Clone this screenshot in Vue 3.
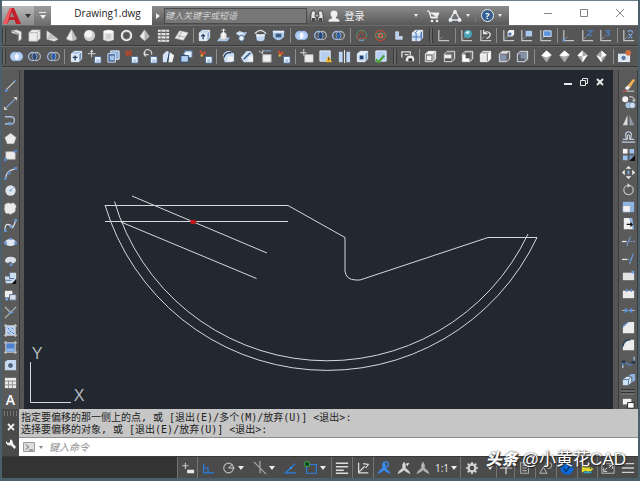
<script setup>
import { ref } from 'vue'

const query = ref('')
const command = ref('')

const axes = '<path d="M3 2v11.500h11" fill="none" stroke="#c4c4c4" stroke-width="1.300"/><path d="M3 13l4-4" stroke="#89a" fill="none"/>'
const smallBox = '<path d="M8 8h7v7H8z" fill="#eef3fa" stroke="#4f6e96"/><path d="M10 11h3v3h-3z" fill="#a9c7ea"/>'
const cube = (f, t, s) =>
  `<path d="M2.500 5.500l3-3h8v8l-3 3h-8z" fill="${s}"/><path d="M2.500 5.500h8v8h-8z" fill="${f}" stroke="#e9edf2"/><path d="M2.500 5.500l3-3h8l-3 3z" fill="${t}" stroke="#e9edf2"/><path d="M13.500 2.500v8l-3 3" fill="none" stroke="#dfe4ea"/>`
const viewCube = (f, t, s, inner) =>
  `<path d="M2.500 5.500l3-3h8v8l-3 3h-8z" fill="${s}" stroke="#f2f2f2"/><path d="M3 6h7v7H3z" fill="${f}"/><path d="M3.500 5l2-2h7l-2 2z" fill="${t}"/>${inner}`
const rings = (a, b, m) =>
  `<circle cx="6" cy="8" r="4.300" fill="${a}" stroke="#9dbbe6" stroke-width="1.400"/><circle cx="10" cy="8" r="4.300" fill="${b}" stroke="${b === 'none' ? '#a9adb4' : '#9dbbe6'}" stroke-width="1.400"/><path d="M8 4.200a4.300 4.300 0 0 1 0 7.600a4.300 4.300 0 0 1 0-7.600z" fill="${m}"/>`
const shape = (d, extra = '') => `<path d="${d}" fill="#ececec" stroke="#bdbdbd" stroke-width=".6"/>${extra}`
const gem = (d) => `<path d="M8 1.500l5.500 5L8 14.500 2.500 7z" fill="#a9a9a9"/><path d="${d}" fill="#fff"/>`
const person = (c) =>
  `<path d="M8 1l1.800 3.500L9.500 8l4 3.500 1.500 3-5-2.500L8 10l-2 2-5 2.500 1.500-3 4-3.500-.3-3.500z" fill="${c}" stroke="${c}" stroke-width=".6"/>`

const icons = {
  polysolid: shape('M3 3l5-1 5 2v8l-3 2V7L3 5z', '<path d="M3 3l7 3v8" stroke="#8a8a8a" fill="none"/>'),
  box: shape('M2 5l3-3h9v9l-3 3H2z', '<path d="M2 5h9v9M11 5l3-3" fill="none" stroke="#b4b4b4"/>'),
  wedge: shape('M2 3l12 9-4 2-8-2z', '<path d="M2 12l3-7 9 7" fill="#c2c2c2"/>'),
  cone: shape('M8 1.500l5.500 10Q8 15.500 2.500 11.500z', '<path d="M8 2l1 11.500q3-.5 4.500-2z" fill="#bdbdbd"/>'),
  sphere: '<circle cx="8" cy="8" r="6" fill="#cdcdcd"/><circle cx="7" cy="6.500" r="4" fill="#f4f4f4"/>',
  cylinder: shape('M2.500 3.500Q8 .5 13.500 3.500v9Q8 15.500 2.500 12.500z', '<path d="M5 6h6v6H5z" fill="#cfcfcf"/><ellipse cx="8" cy="4" rx="5" ry="1.500" fill="#fafafa"/>'),
  torus: '<circle cx="8" cy="8" r="5" fill="none" stroke="#eee" stroke-width="2.200"/><circle cx="8" cy="8" r="3.800" fill="none" stroke="#999" stroke-width=".7"/>',
  pyramid: shape('M8 2l5 7-5 4.500L3 9z', '<path d="M8 2v11.500L13 9z" fill="#b4b4b4"/>'),
  helix: '<path d="M2 3h12M2 6.500h12M2 10h12M2 13.500h12" stroke="#e4e4e4" stroke-width="2.200"/><path d="M5.500 2v12M10.500 2v12" stroke="#777" stroke-width="1"/>',
  plane: shape('M6 3l9 2-5 8-9-2z', '<path d="M4 8l8 2M8 4l-3 7" stroke="#aaa"/>'),
  press: cube('#dfeaf8', '#b8d2ef', '#8fb2dc') + '<path d="M6.500 12V7M4.500 9l2-2 2 2" stroke="#1d3554" stroke-width="1.300" fill="none"/>',
  extrude: '<path d="M1 14l3-4h11l-3 4z" fill="#a9c7ea"/>' + shape('M5 6l3-2 3 2v6H5z') + '<path d="M8 10V1M6 3l2-2 2 2" stroke="#fff" fill="none"/>',
  sweep: '<path d="M2 6l4-3 4 2 4-1-3 5-3 1-3-2z" fill="#b9d3f2"/><path d="M3 5l3 1 4-1" stroke="#fff" fill="none"/><circle cx="8" cy="11" r="3" fill="#e8f0fa" stroke="#46617f"/>',
  revolve: '<path d="M2 6Q8-1 14 6" fill="none" stroke="#e8e8e8" stroke-width="1.400"/><path d="M3 6l5 1 5-1-1 7Q8 15 4 13z" fill="#bcd5f2"/><path d="M4 7h8v2H4z" fill="#eee"/>',
  loft: '<path d="M2 3h12v6q-6 8-12 0z" fill="#a9c9ee"/><path d="M5 6h6v4H5z" fill="#3e5c7e"/><path d="M2 3h12v2H2z" fill="#e9f1fb"/>',
  union: rings('#b9d2f5', '#b9d2f5', '#f2f7ff'),
  subtract: rings('none', 'none', '#26467c'),
  intersect: rings('none', 'none', '#2d5ca5'),
  orbitA: '<circle cx="8" cy="8" r="5.500" fill="none" stroke="#4e9a72"/><path d="M3 11L8 3l5 8z" fill="none" stroke="#b54a3c"/><path d="M5 13h6" stroke="#7fa3d8"/>',
  orbitB: '<circle cx="8" cy="8" r="5.500" fill="none" stroke="#c0483c" stroke-width="1.300"/><ellipse cx="8" cy="8" rx="6" ry="2.500" fill="none" stroke="#3da06a"/><circle cx="8" cy="8" r="2" fill="none" stroke="#e06a54" stroke-width="1.400"/>',
  ell: '<path d="M5 4h3v5h4v3H5z" fill="#b5d0f2" stroke="#e4eefb" stroke-width=".7"/>',
  blocks: cube('#cfe1f7', '#e6f0fc', '#7fabdf') + '<path d="M6.500 5v9M2 9.500h9M8 2.500l-3 3M12 4v8" stroke="#3c6fae" fill="none"/>',
  ucs: axes,
  ucsWorld: axes + '<circle cx="9.500" cy="6.500" r="4.300" fill="#4ea4b8"/><path d="M6.500 5q3-3 5-1l-2 3z" fill="#d7eff4"/>',
  ucsPrev: axes + '<path d="M6 6q4-4 7 0 0 4-4 5M6 2v4h4" fill="none" stroke="#ececec" stroke-width="1.300"/>',
  ucsFace: axes + '<path d="M7 4l2-2h5v5l-2 2H7z" fill="#f2f2f2"/><path d="M8 5h3v3H8z" fill="#416ea8"/>',
  ucsObj: axes + '<path d="M7 3h7v6H7z" fill="#abc8ee"/>',
  ucsView: axes + '<path d="M6 3h8v6H6z" fill="#5c94dc" stroke="#dce8f8"/>',
  ucsOrigin: axes + '<circle cx="3" cy="13" r="1.500" fill="#6aa0e2"/>',
  ucsZ: axes + '<path d="M8 3h5L8 8h5" fill="none" stroke="#4d7fc0" stroke-width="1.300"/>',
  ucsThree: axes + '<path d="M8 3h4l-2 2q3 0 2 3H8" fill="none" stroke="#4d7fc0" stroke-width="1.300"/>',
  ucsX: axes + '<path d="M7 4q4-3 6 1M8 6l4 5M12 6l-4 5" fill="none" stroke="#7ba9e6" stroke-width="1.200"/>',
  faceExtrude: cube('#dbe8f8', '#9fc2eb', '#6c95c8') + '<path d="M4 9h5M6.500 7v5" stroke="#223c5d" stroke-width="1.400"/>',
  faceMove: '<path d="M5 1v8M1 5h8M5 1L4 3h2z" stroke="#ddd" fill="#ddd"/>' + smallBox,
  faceOffset: '<path d="M5 2h9v9H5z" fill="#8eb1dc" stroke="#e4eefa"/><path d="M2 5h8v9H2z" fill="#3a5b88" stroke="#dce8f7"/><path d="M4 7h5v5H4z" fill="#a7c4e8"/>',
  faceDelete: '<path d="M2 2l6 5M8 2L2 7" stroke="#b5462e" stroke-width="2.400"/>' + smallBox,
  faceRotate: '<path d="M3 8A4 4 0 1 1 9 6M2 2v4h4" fill="none" stroke="#d6d6d6" stroke-width="1.200"/>' + smallBox,
  faceTaper: '<path d="M2 6l4-4 3 1-3 11H2z" fill="#d5e4f7"/><path d="M9 3l5 4-2 7H8z" fill="#f1f1f1"/><path d="M9 2L7 14" stroke="#27476e"/>',
  faceCopy: '<path d="M6 2h8v7H6z" fill="#dbe8f8" stroke="#50749f"/><path d="M2 7h8v7H2z" fill="#b4cff0" stroke="#27476e"/><path d="M5 5h7" stroke="#fff"/>',
  faceColor: '<path d="M2 2l3 3M8 3L4 7" stroke="#c8512e" stroke-width="2.200"/><circle cx="4" cy="7" r="1.300" fill="#d9b23a"/>' + smallBox,
  fillet: '<path d="M2 7Q3 2 9 2l5 3v8l-4 1H4z" fill="#c8dcf4"/><path d="M3 9Q5 3 11 4" fill="none" stroke="#223c5d" stroke-width="1.500"/><path d="M7 8h6v5H7z" fill="#f2f2f2"/>',
  chamfer: '<path d="M1 9l6-7h4l3 4v8H4z" fill="#cfe0f5"/><path d="M4 11l7-7" stroke="#36557c" stroke-width="1.500"/><path d="M9 8h5v5H9z" fill="#f4f4f4"/>',
  edgeCopy: '<path d="M1 2l4 3M5 1v4" stroke="#ddd"/><path d="M5 6h9v8H5z" fill="#f0f0f0" stroke="#aaa"/><path d="M5 2h9" stroke="#8eb1dc"/>',
  imprint: '<path d="M4 0v7M0 4h7" stroke="#ddd"/>' + shape('M5 6h9v8H5z'),
  check: '<path d="M2 2h11v11H2z" fill="#b7d0f1" stroke="#e5eefa"/><path d="M11 7l4 7H8z" fill="#f3b62d"/><path d="M11.500 9v3" stroke="#402a00"/>',
  separate: '<path d="M2 3h4v11H2zM10 3h4v11h-4z" fill="#bcd5f4"/><path d="M8 1v14" stroke="#eee"/>',
  shell: cube('#cfe1f7', '#e6f0fc', '#7fabdf') + '<path d="M5 7h4v4H5z" fill="#1f4272"/>',
  clean: '<path d="M3 2h11v11H3z" fill="#b7d0f1" stroke="#e7effb"/><path d="M3 11l3 3 6-7" fill="none" stroke="#47a338" stroke-width="2.400"/>',
  named: '<path d="M2 9V3h9v3M5 6h4" fill="none" stroke="#e0e0e0" stroke-width="1.400"/><path d="M6 13q0-6 5-6t4 6z" fill="#ececec"/><path d="M9 10h4v3H9z" fill="#333"/>',
  vTop: viewCube('#6f6f6f', '#fff', '#bbb', '<path d="M4 7h5v5H4z" fill="#eee"/>'),
  vBottom: viewCube('#eee', '#777', '#666', '<path d="M3 10h7v3H3z" fill="#555"/>'),
  vLeft: viewCube('#fff', '#999', '#777', '<path d="M6 4h5v6H6z" fill="#555"/>'),
  vRight: viewCube('#e9e9e9', '#aaa', '#fff', '<path d="M10 5v8" stroke="#777"/>'),
  vFront: viewCube('#8493aa', '#ddd', '#666', ''),
  vBack: viewCube('#59616e', '#768091', '#8b95a5', '<path d="M6 4h6v6H6z" fill="#8592a8"/>'),
  isoA: gem('M8 1.500l5.500 5L8 9 2.500 7z'),
  isoB: gem('M2.500 7L8 1.500l5.500 5L8 8z'),
  isoC: gem('M8 1.500V8L2.500 7zM8 8l5.500-1.500L8 14.500z'),
  isoD: gem('M8 1.500l5.500 5L8 9zM2.500 7L8 9v5.500z'),
  camera: '<path d="M1 5h13v9H1z" fill="#dfe7f2"/><circle cx="7" cy="9.500" r="3" fill="#5c7da8" stroke="#fff"/><circle cx="12" cy="4" r="3" fill="#d4703c"/>',
  line: '<path d="M3 13L13 3" stroke="#c9c9c9" stroke-width="1.300"/><path d="M2 12h3v3H2zM12 2h2v2h-2z" fill="#5c86bd"/>',
  xline: '<path d="M3 13L13 3" stroke="#7fa5d6" stroke-width="1.300"/><path d="M1 15v-4l4 4zM15 1v4l-4-4z" fill="#d6cfc0"/>',
  pline: '<path d="M2 4h7q4 1 3 5t-5 2l-5 1" fill="none" stroke="#a7bedd" stroke-width="1.400"/><path d="M6 10h3v3H6z" fill="#6c9ddc"/>',
  polygon: shape('M8 2.500l6 4.500-2.500 6.500h-7L2 7z'),
  rect: shape('M3 4h10v8H3z', '<path d="M12 2h3v3h-3zM1 11h3v3H1z" fill="#5484c4"/>'),
  arc: '<path d="M3 13Q3 5 13 3" fill="none" stroke="#c9d4e2" stroke-width="1.300"/><path d="M1 12h3v3H1zM5 6h3v3H5zM12 1h3v3h-3z" fill="#5d89c4"/>',
  circle: '<circle cx="8" cy="8" r="5.500" fill="#dfe6ef"/><path d="M8 8l4-4" stroke="#8fb1dd"/><circle cx="8" cy="8" r="1.300" fill="#8fb1dd"/>',
  cloud: shape('M3 3q3-2 5 0 4-2 5 1 2 2 0 4 1 4-3 5-2 2-4 0-4 1-4-3 -1-2 0-4-1-2 1-3z'),
  spline: '<path d="M2 13q0-7 4-6t4 3 4-8" fill="none" stroke="#d7dfea" stroke-width="1.400"/><path d="M1 12h3v3H1zM7 8h3v3H7zM12 1h3v3h-3z" fill="#6892cc"/>',
  ellipse: '<ellipse cx="8" cy="8" rx="6" ry="3.800" fill="#dfe7f1"/><path d="M6.500 3h3v2h-3zM1 7h3v3H1zM12 7h3v3h-3z" fill="#6793d0"/>',
  ellArc: '<path d="M2 9q0-5 6-5t6 4q-1 3-4 3l-2-2-3 2z" fill="#d8e0ea"/><path d="M7 11h3v3H7z" fill="#6793d0"/>',
  insert: '<path d="M2 7h5V3h7v6l-4 5H3z" fill="#cfdff2"/><path d="M7 3v6h5M3 11h6" stroke="#4b719f" fill="none"/><path d="M14 10v5H9z" fill="#111"/>',
  block: '<path d="M2 3h8v7H2z" fill="#f0f0f0"/><path d="M7 7h7v6H7z" fill="#d5dfec" stroke="#5a6d86"/><circle cx="4" cy="12" r="1.500" fill="#7ba6df"/>',
  point: '<path d="M2 2l6 6M14 2L2 14" stroke="#aeb9b9" stroke-width="1.400" fill="none"/><path d="M8 8h3" stroke="#6c9ddc"/><circle cx="8" cy="8" r="1.300" fill="#6c9ddc"/>',
  hatch: '<path d="M3 3h10v10H3z" fill="#b9d2f2"/><path d="M1 3h14M3 1v14M13 1v14M1 13h14" stroke="#d9d9d9"/><path d="M5 5l2 2M9 5l2 2M7 8l2 2M5 10l2 2M10 10l2 2" stroke="#3c6fae"/>',
  gradient: '<path d="M3 3h10v10H3z" fill="#4e84cf"/><path d="M4 9h8v3H4z" fill="#8db4e8"/><path d="M1 3h14M3 1v14M13 1v14M1 13h14" stroke="#d9d9d9"/>',
  region: '<path d="M2 4l3-2h9v11H2z" fill="#c6d9f0"/><circle cx="8" cy="8" r="3.200" fill="#4d6787" stroke="#eef4fb"/>',
  table: '<path d="M2 3h12v11H2z" fill="#ececec"/><path d="M2 6.500h12M2 10.500h12M6 6v8M10 6v8" stroke="#8c8c8c"/>',
  erase: '<path d="M7 8l6-7 2 1-5 8z" fill="#f1b154"/><path d="M4 11l3-3 3 2-3 3z" fill="#f6f6f6"/><path d="M2 14h4" stroke="#d35543" stroke-width="1.500"/><path d="M6 14h8" stroke="#ddd"/>',
  copy: '<circle cx="4.500" cy="4.500" r="3.200" fill="#f3f3f3"/><path d="M9 2q5-1 5 4M12 5l2 2 1-2" fill="none" stroke="#eee"/><circle cx="8" cy="11" r="3.200" fill="#a9c7ea"/><circle cx="12" cy="11" r="3.200" fill="#cfe0f4" stroke="#5e7c9f" stroke-width=".6"/>',
  mirror: '<path d="M7 2v11H2z" fill="#d9d9d9"/><path d="M9 2v11h5z" fill="#8f9aa6"/>',
  offset: '<path d="M1 13h14M2 10h4q-3-8 2-8t2 8h4" fill="none" stroke="#b9cbe2" stroke-width="1.300"/><path d="M7 10q-1-5 1-5t1 5" fill="none" stroke="#eee"/>',
  array: '<path d="M2 2h5v5H2z" fill="#f4f4f4"/><path d="M9 2h5v5H9zM2 9h5v5H2z" fill="#9dc0ec"/><path d="M9 9h5l-5 5z" fill="#6b99d2"/><path d="M15 9v6H9z" fill="#111"/>',
  move: '<path d="M8 1l3 3H5zM8 15l3-3H5zM1 8l3-3v6zM15 8l-3-3v6z" fill="#f1f1f1"/><path d="M7 6h2v4H7z" fill="#79a7e0"/>',
  rotate: '<circle cx="8" cy="8.500" r="5" fill="none" stroke="#b9b9b9" stroke-width="1.400"/><path d="M7 1v5l3-2z" fill="#ddd"/>',
  scale: '<path d="M2 3h12v11H2z" fill="#8fb4e3"/><path d="M2 7h8v7H2z" fill="#f2f2f2" stroke="#7493b8" stroke-width=".6"/>',
  stretch: '<path d="M3 2h6l4 12H3z" fill="#f0f0f0"/><path d="M9 2h3l2 12h-2z" fill="#8fb4e3"/><path d="M6 9h6M10 7l2 2-2 2" stroke="#111" stroke-width="1.300" fill="none"/>',
  trim: '<path d="M1 8h5" stroke="#e6e6e6" stroke-width="1.400"/><path d="M7 8h8" stroke="#7398c8" stroke-dasharray="2 1"/><path d="M6 13l4-10" stroke="#7ba9e6"/>',
  extend: '<path d="M1 9h6" stroke="#e0e0e0" stroke-width="1.400"/><path d="M7 9h4" stroke="#7398c8" stroke-dasharray="2 1"/><path d="M9 14l4-11" stroke="#6f9bd6" stroke-width="1.300"/>',
  breakAt: '<path d="M2 5h12v8H2z" fill="#e4e4e4"/><path d="M11 3h3v3h-3z" fill="#6c9ddc"/>',
  breakGap: '<path d="M2 5h12v8H2z" fill="#ececec"/><path d="M5 3h2v3H5zM10 3h2v3h-2z" fill="#5c84bb"/>',
  join: '<path d="M1 8h14" stroke="#b9b9b9"/><path d="M4 5l4 3-4 3zM12 5L8 8l4 3z" fill="#5b93e0"/>',
  cham: '<path d="M2 8l6-6h6v12H2z" fill="#ececec"/><path d="M2 7l6-5" stroke="#6ca0e6" stroke-width="1.300"/>',
  fil: '<path d="M2 14V10q1-7 8-7h4v11z" fill="#ececec"/><path d="M2 10q1-7 8-7" stroke="#25405f" stroke-width="1.600" fill="none"/>',
  blend: '<path d="M2 13V9q0-4 4 0t8-2V2" fill="none" stroke="#547fba" stroke-width="1.500"/><path d="M1 6h4v2H1zM11 7h4v2h-4z" fill="#1e2b3b"/><path d="M2 14v-3M14 2v3" stroke="#ddd"/>',
  explode: '<path d="M2 8l4-3h5v6l-3 3H2z" fill="#cde0f6"/><path d="M8 4l3-2h4v7l-3 2V5z" fill="#8db4e4"/><path d="M2 8h6v6M8 8l3-3" stroke="#59789d" fill="none"/>',
  order: '<path d="M2 3h9v6H2z" fill="#f4f4f4"/><path d="M7 7h7v6H7z" fill="#fff" stroke="#222"/>',
  snap: '<path d="M5 2v7M1.500 5.500h7" stroke="#cfcfcf" stroke-width="1.200"/><path d="M7 10h8v4H7z" fill="#e9e9e9"/>',
  ortho: '<path d="M3 3v10.500h12M3 8h5v5" fill="none" stroke="#2b7de0" stroke-width="1.400"/>',
  polar: '<circle cx="7.500" cy="8" r="5.500" fill="none" stroke="#bdbdbd" stroke-width="1.300"/><path d="M7.500 8h7M7.500 8l4-4" stroke="#ddd" fill="none"/>',
  iso: '<path d="M1 1l14 14M8 0v14" stroke="#aaa" stroke-width="1.400"/>',
  track: '<path d="M14 3L3 13.500h12" fill="none" stroke="#2b7de0" stroke-width="1.500"/><circle cx="9" cy="8" r="1.300" fill="#4894f0"/>',
  osnap: '<path d="M3 4h11v10H3z" fill="none" stroke="#2f7fe4" stroke-width="1.300"/><path d="M1 1h5v5H1z" fill="#10361a" stroke="#36bd47"/>',
  weight: '<path d="M1 2.500h14M1 6.500h14" stroke="#ddd" stroke-width="1.600"/><path d="M1 10.500h9M1 14h14" stroke="#ddd" stroke-width="1.800"/>',
  ducs: '<path d="M3 2v11.500h11M3 13l7-7M8 3l6 1-3 4" fill="none" stroke="#ddd" stroke-width="1.400"/>',
  annoBlue: person('#3a8cf0') + '<circle cx="10" cy="4" r="3" fill="none" stroke="#3a8cf0" stroke-width="1.400"/>',
  annoLight: person('#d6d6d6') + '<path d="M10 3l4-1-2 4z" fill="#eee"/>',
  anno: person('#b5b5b5'),
  gear: '<circle cx="8" cy="8" r="4" fill="none" stroke="#d0d0d0" stroke-width="2.800"/><path d="M8 1v3M8 12v3M1 8h3M12 8h3M3 3l2 2M11 11l2 2M13 3l-2 2M3 13l2-2" stroke="#d0d0d0" stroke-width="1.800"/>',
  plus: '<path d="M8 1v14M1 8h14" stroke="#ddd" stroke-width="1.400"/>',
  doc: '<path d="M3 2h9v12H3zM5 5h5M5 8h5M5 11h5" fill="none" stroke="#aaa" stroke-width="1.200"/>',
  isolate: '<path d="M5 7l4 7H1z" fill="none" stroke="#c8c8c8"/><circle cx="11" cy="5" r="3.500" fill="none" stroke="#c8c8c8"/>',
  perf: '<circle cx="8" cy="8" r="7.500" fill="#0c6ad8"/><path d="M4 8l3 4 6-8" fill="none" stroke="#072b60" stroke-width="1.400"/>',
  fish: '<path d="M1 5l4 2q5-3 9 2-4 5-9 2l-4 2z" fill="#e5dc2a"/><path d="M3 12h9v2H3z" fill="#30a7cb"/><circle cx="11" cy="8" r="1" fill="#173d52"/>',
  full: '<path d="M1 3h14v11H1z" fill="none" stroke="#c5c5c5"/><path d="M4 11l3-3M12 5L9 8M3 8v4h4M9 5h4v4" fill="none" stroke="#ddd"/>',
  burger: '<path d="M1 3h14M1 8h14M1 13h14" stroke="#cfcfcf" stroke-width="1.700"/>',
}

const topRow = [
  { names: ['polysolid', 'box', 'wedge', 'cone', 'sphere', 'cylinder', 'torus', 'pyramid', 'helix', 'plane'] },
  { names: ['press', 'extrude', 'sweep', 'revolve', 'loft'] },
  { names: ['union', 'subtract', 'intersect'] },
  { names: ['orbitA', 'orbitB', 'ell', 'blocks'] },
  { names: ['ucs'], grip: true },
  { names: ['ucsWorld', 'ucsPrev'] },
  { names: ['ucsFace', 'ucsObj', 'ucsView'] },
  { names: ['ucsOrigin', 'ucsZ', 'ucsThree'] },
  { names: ['ucsX'] },
]
const secondRow = [
  { names: ['union', 'subtract', 'intersect'] },
  { names: ['faceExtrude', 'faceMove', 'faceOffset', 'faceDelete', 'faceRotate', 'faceTaper', 'faceCopy', 'faceColor'] },
  { names: ['fillet', 'chamfer', 'edgeCopy', 'faceColor'] },
  { names: ['imprint', 'check', 'separate', 'shell', 'clean'] },
  { names: ['named'], grip: true },
  { names: ['vTop', 'vBottom', 'vLeft', 'vRight', 'vFront', 'vBack'] },
  { names: ['isoA', 'isoB', 'isoC', 'isoD'] },
  { names: ['camera'] },
]
const rows = [topRow, secondRow]
const drawTools = ['line', 'xline', 'pline', 'polygon', 'rect', 'arc', 'circle', 'cloud', 'spline', 'ellipse', 'ellArc', 'insert', 'block', 'point', 'hatch', 'gradient', 'region', 'table']
const editTools = ['erase', 'copy', 'mirror', 'offset', 'array', 'move', 'rotate', 'scale', 'stretch', 'trim', 'extend', 'breakAt', 'breakGap', 'join', 'cham', 'fil', 'blend', 'explode']
const status = [
  { icon: 'snap' }, { icon: 'ortho' }, { icon: 'polar', menu: true }, { icon: 'iso', menu: true },
  { icon: 'track' }, { icon: 'osnap', menu: true }, { icon: 'weight', edge: true }, { icon: 'ducs', edge: true },
  { icon: 'annoBlue', edge: true }, { icon: 'annoLight' }, { icon: 'anno' }, { label: '1:1', menu: true },
  { icon: 'gear', menu: true, edge: true, wide: true }, { icon: 'plus', edge: true }, { icon: 'doc', edge: true },
  { icon: 'isolate', edge: true }, { icon: 'perf', edge: true }, { icon: 'fish', edge: true },
  { icon: 'full', edge: true }, { icon: 'burger' },
]
</script>

<template>
  <div class="app">
    <header class="title">
      <button class="logo" aria-label="A">
        <svg viewBox="0 0 20 18" width="20" height="18">
          <path d="M1 17L8 1h4l7 16h-5l-1.500-4h-5L5 17z" fill="#c3202c" />
          <path d="M1 17L8 1l2 0-5 16z" fill="#ee5a5f" />
          <path d="M8 10l2-5 2 5z" fill="#8c8c8c" />
        </svg>
        <i class="caret dark"></i>
      </button>
      <button class="quick" aria-label="menu"><i class="bar"></i><i class="caret"></i></button>
      <div class="tab">Drawing1.dwg</div>
      <div class="info">
        <i class="next"></i>
        <input v-model="query" class="search" aria-label="search" placeholder="键入关键字或短语" />
        <button class="plain" aria-label="find">
          <svg viewBox="0 0 14 14" width="14" height="14">
            <path d="M2 2h3l1 4v6H1V6zM9 2h3l1 4v6H8V6zM5 5h4v3H5z" fill="#e6e6e6" stroke="#333" stroke-width=".7" />
            <path d="M2 9h3v3H2zM9 9h3v3H9z" fill="#444" />
          </svg>
        </button>
        <button class="login">
          <svg viewBox="0 0 14 14" width="14" height="14">
            <path d="M1 13q0-4 4-4-2-2-2-4 0-4 4-4t4 4q0 2-2 4 4 0 4 4z" fill="#f0f0f0" stroke="#555" stroke-width=".6" />
          </svg>
          <span>登录</span>
          <i class="caret tiny"></i>
        </button>
        <button class="plain" aria-label="cart">
          <svg viewBox="0 0 14 14" width="14" height="14">
            <path d="M1 2h2l2 7h7M4 4h9l-2 4H5z" fill="#eee" stroke="#eee" />
            <circle cx="6" cy="12" r="1.300" fill="#eee" /><circle cx="11" cy="12" r="1.300" fill="#eee" />
          </svg>
        </button>
        <button class="plain with-caret" aria-label="apps">
          <svg viewBox="0 0 14 14" width="14" height="14">
            <path d="M7 2l5 9H2z" fill="none" stroke="#dce8f8" stroke-width="1.500" />
            <circle cx="7" cy="3" r="2" fill="#eee" /><circle cx="2.500" cy="11" r="2" fill="#eee" /><circle cx="11.500" cy="11" r="2" fill="#eee" />
          </svg>
          <i class="caret tiny"></i>
        </button>
        <button class="help with-caret" aria-label="help"><b>?</b><i class="caret tiny"></i></button>
      </div>
      <div class="win">
        <button aria-label="minimize"><svg viewBox="0 0 10 10" width="10" height="10"><path d="M1 5.500h8" /></svg></button>
        <button aria-label="maximize"><svg viewBox="0 0 10 10" width="10" height="10"><path d="M1.500 1.500h7v7h-7z" /></svg></button>
        <button aria-label="close"><svg viewBox="0 0 10 10" width="10" height="10"><path d="M1 1l8 8M9 1L1 9" /></svg></button>
      </div>
    </header>

    <nav v-for="(row, r) in rows" :key="r" class="tools" :class="{ second: r === 1 }">
      <div
        v-for="(group, g) in row"
        :key="g"
        class="group"
        :class="{ grip: group.grip, first: g === 0 }"
        :style="{ flexGrow: group.names.length }"
      >
        <button v-for="name in group.names" :key="name" class="tool" :aria-label="name">
          <svg viewBox="0 0 16 16" width="15" height="15" v-html="icons[name]"></svg>
        </button>
      </div>
    </nav>

    <main class="work">
      <aside class="side">
        <button v-for="name in drawTools" :key="name" class="tool" :aria-label="name">
          <svg viewBox="0 0 16 16" width="15" height="15" v-html="icons[name]"></svg>
        </button>
        <button class="tool letter">A</button>
      </aside>
      <section class="model">
        <svg class="drawing" viewBox="24 70 589 339" preserveAspectRatio="xMinYMin meet">
          <g fill="none" stroke="#d6d9dc" stroke-width="1">
            <path d="M105 205.500H288L345 237.500V271Q346 280 356 280H360L488 237.500H537" />
            <path d="M105 205A232 232 0 0 0 537 237.500" />
            <path d="M114.500 201.500A222 222 0 0 0 528 234" />
            <path d="M105 221.500H288M132 196L267 253M121 222L256.500 278.500" />
            <path d="M30.500 362V402.500H71" />
          </g>
          <path d="M190 220h5l2 2-3 2h-3z" fill="#c8161d" />
          <g class="axis"><text x="37" y="359">Y</text><text x="79" y="401">X</text></g>
        </svg>
        <div class="doc-win">
          <button aria-label="minimize drawing"><svg viewBox="0 0 10 10" width="10" height="10"><path d="M1 7h8" /></svg></button>
          <button aria-label="restore drawing"><svg viewBox="0 0 10 10" width="10" height="10"><path d="M1.500 3.500h5v5h-5zM3.500 3V1.500h5v5H7" class="fine" /></svg></button>
          <button aria-label="close drawing"><svg viewBox="0 0 10 10" width="10" height="10"><path d="M2 2l6 6M8 2L2 8" /></svg></button>
        </div>
      </section>
      <aside class="side right">
        <button v-for="name in editTools" :key="name" class="tool" :aria-label="name">
          <svg viewBox="0 0 16 16" width="15" height="15" v-html="icons[name]"></svg>
        </button>
        <i class="handle"></i>
        <button class="tool cut" aria-label="order">
          <svg viewBox="0 0 16 16" width="15" height="15" v-html="icons.order"></svg>
        </button>
      </aside>
    </main>

    <section class="command">
      <div class="rail">
        <i class="dots"></i>
        <button aria-label="close command line"><svg viewBox="0 0 10 10" width="10" height="10"><path d="M2 2l6 6M8 2L2 8" stroke="#f0f0f0" stroke-width="1.800" /></svg></button>
        <button aria-label="customize"><svg viewBox="0 0 12 12" width="12" height="12"><path d="M1 3l2 2 2-1V1.500q3 0 3 4l3 3.500-1.500 2L6 7.500Q2 8 1 5z" fill="#f0f0f0" /></svg></button>
      </div>
      <div class="console">
        <div class="log">
          <p>指定要偏移的那一侧上的点, 或 [退出(E)/多个(M)/放弃(U)] &lt;退出&gt;:</p>
          <p>选择要偏移的对象, 或 [退出(E)/放弃(U)] &lt;退出&gt;:</p>
        </div>
        <label class="prompt">
          <svg viewBox="0 0 12 12" width="12" height="12">
            <path d="M.5 1.500h11v9H.5z" fill="#dedede" stroke="#9a9a9a" />
            <path d="M3 3.500l2.500 2.500L3 8.500M6 9h4" fill="none" stroke="#555" />
          </svg>
          <i class="caret grey"></i>
          <input v-model="command" aria-label="command" placeholder="键入命令" />
        </label>
      </div>
    </section>

    <footer class="status">
      <div class="blank"></div>
      <button
        v-for="(cell, i) in status"
        :key="i"
        class="cell"
        :class="{ edge: cell.edge, wide: cell.wide }"
        :aria-label="cell.icon || cell.label"
      >
        <svg v-if="cell.icon" viewBox="0 0 16 16" width="14" height="14" v-html="icons[cell.icon]"></svg>
        <span v-else>{{ cell.label }}</span>
        <i v-if="cell.menu" class="caret"></i>
      </button>
      <div class="signature"><b>头条</b><span>@小黄花CAD</span></div>
    </footer>
  </div>
</template>

<style>
body { margin: 0; }
</style>

<style scoped>
.app {
  box-sizing: border-box;
  min-height: 100vh;
  display: flex;
  flex-direction: column;
  padding: 0 2px 3px;
  background: #4b606a;
  font-family: "Open Sans", "Noto Sans", "Noto Sans CJK SC", sans-serif;
  font-size: 10px;
}
button, input {
  margin: 0;
  padding: 0;
  border: 0;
  background: none;
  font-family: inherit;
  font-size: inherit;
  min-width: 0;
}
svg { display: block; flex: none; }
.caret {
  flex: none;
  width: 0;
  height: 0;
  border: 3px solid transparent;
  border-top: 4px solid #eee;
  border-bottom: 0;
}
.caret.dark { border-top-color: #333; }
.caret.tiny { border-width: 3px 2px 0; }
.caret.grey { border-width: 3px 2px 0; border-top-color: #888; }

.title {
  box-sizing: border-box;
  display: flex;
  height: 25px;
  border-top: 1px solid #68828a;
  background: #fff;
  align-items: flex-end;
}
.logo, .quick {
  display: flex;
  align-items: center;
  height: 19px;
  background: linear-gradient(#b8b8b8, #8a8a8a);
}
.logo { width: 32px; gap: 3px; }
.quick {
  flex-direction: column;
  justify-content: center;
  gap: 2px;
  width: 17px;
  background: linear-gradient(#9a9a9a, #6e6e6e);
}
.bar { width: 7px; height: 1px; background: #eee; }
.tab {
  width: 101px;
  height: 24px;
  box-sizing: border-box;
  padding-left: 12px;
  line-height: 24px;
  font-size: 10px;
  text-align: center;
  color: #222;
}
.info {
  flex: 1;
  display: flex;
  align-items: center;
  height: 19px;
  background: linear-gradient(#8c8c8c, #585858);
}
.next {
  border: 3px solid transparent;
  border-left: 4px solid #eee;
  border-right: 0;
  margin: 0 4px;
}
.search {
  flex: 142;
  height: 16px;
  box-sizing: border-box;
  border: 1px solid #4a4a4a;
  background: #777;
  color: #fff;
  font-size: 9px;
  font-style: italic;
}
.search::placeholder { color: #d2d2d2; opacity: 1; }
.plain { width: 20px; display: flex; justify-content: center; }
.with-caret { display: flex; align-items: center; gap: 4px; }
.login {
  flex: 96;
  display: flex;
  align-items: center;
  gap: 3px;
  color: #f2f2f2;
}
.login .caret { margin-left: auto; margin-right: 5px; }
.plain.with-caret { width: 32px; }
.help { width: 34px; border-left: 1px solid #777; padding-left: 5px; }
.help b {
  width: 11px;
  height: 11px;
  border-radius: 50%;
  background: #345d90;
  border: 1px solid #eee;
  color: #fff;
  font-size: 9px;
  line-height: 11px;
}
.win {
  flex: none;
  width: 129px;
  height: 24px;
  display: flex;
  justify-content: flex-end;
  align-items: center;
}
.win button { width: 36px; display: flex; justify-content: center; }
.win path { fill: none; stroke: #858585; }

.tools {
  box-sizing: border-box;
  display: flex;
  height: 21px;
  border-top: 1px solid #6c6c6c;
  border-bottom: 1px solid #3b3b3b;
  background: #565656;
}
.tools.second { padding-right: 4px; }
.group {
  flex: 1 1 0;
  display: flex;
  margin-left: 5px;
  position: relative;
}
.group::before {
  content: "";
  position: absolute;
  left: -3px;
  top: 2px;
  bottom: 2px;
  width: 1px;
  background: #8d8d8d;
}
.group.grip { margin-left: 8px; }
.group.grip::before, .group.first::before {
  left: -5px;
  width: 2px;
  border: solid #3a3a3a;
  border-width: 0 1px;
  background: #666;
}
.tool {
  flex: 1;
  display: flex;
  align-items: center;
  justify-content: center;
}

.work {
  flex: 1;
  display: flex;
  min-height: 339px;
  border-top: 3px solid #606060;
  background: #555;
}
.side {
  flex: none;
  box-sizing: border-box;
  width: 18px;
  margin-right: 4px;
  padding-top: 7px;
  display: flex;
  flex-direction: column;
  border-right: 1px solid #3c3c3c;
  background: #5a5a5a;
}
.side .tool { min-height: 0; height: 0; }
.side .letter {
  color: #fff;
  font-size: 14px;
  font-weight: 600;
  line-height: 18px;
}
.side.right {
  width: 20px;
  margin: 0 0 0 5px;
  border-left: 1px solid #3c3c3c;
}
.handle {
  height: 6px;
  margin: 1px 2px;
  background: repeating-linear-gradient(#333 0 1px, #6a6a6a 1px 3px);
}
.side .cut { flex: none; height: 13px; overflow: hidden; align-items: flex-start; }
.model {
  flex: 1;
  min-width: 0;
  position: relative;
  background: #212830;
}
.drawing { width: 100%; }
.axis {
  fill: #b4b9be;
  font-family: "Liberation Sans", sans-serif;
  font-size: 16px;
}
.axis text { text-anchor: middle; }
.doc-win {
  position: absolute;
  top: 7px;
  right: 8px;
  display: flex;
  gap: 6px;
}
.doc-win path { fill: none; stroke: #e8e8e8; stroke-width: 2; }
.doc-win .fine { stroke-width: 1; }

.command { display: flex; height: 47px; }
.rail {
  width: 17px;
  display: flex;
  flex-direction: column;
  align-items: center;
  gap: 5px;
  padding-top: 2px;
  background: #4a4a4a;
}
.dots {
  width: 13px;
  height: 5px;
  background: repeating-linear-gradient(90deg, #777 0 1px, #444 1px 3px);
}
.rail button { height: 12px; display: flex; align-items: center; }
.console { flex: 1; display: flex; flex-direction: column; min-width: 0; }
.log {
  padding: 3px 2px 1px;
  background: #c6c6c6;
  border-bottom: 1px solid #8d8d8d;
  font-family: "DejaVu Sans Mono", "Noto Sans CJK SC", monospace;
  color: #222;
}
.log p { margin: 0; height: 12px; line-height: 12px; white-space: nowrap; }
.prompt {
  flex: 1;
  display: flex;
  align-items: center;
  gap: 4px;
  padding-left: 4px;
  background: #fff;
}
.prompt input { flex: 1; padding-left: 2px; font-style: italic; height: 16px; outline: none; }
.prompt input::placeholder { color: #8c8c8c; opacity: 1; }

.status {
  position: relative;
  display: grid;
  height: 21px;
  border-top: 1px solid #3a3a3a;
  background: #4b4b4b;
  grid-template-columns:
    175fr 20fr 21fr 30fr 32fr 19fr 32fr 21fr 21fr 21fr 19fr 19fr 28fr
    36fr 18fr 21fr 21fr 21fr 20fr 21fr 20fr;
}
.blank { background: #333; }
.cell {
  display: flex;
  align-items: center;
  justify-content: center;
  gap: 2px;
  color: #e6e6e6;
  box-sizing: border-box;
}
.cell:nth-child(2), .cell:nth-child(3) { border-left: 1px solid #747474; }
.cell.edge { border-left: 1px solid #747474; }
.cell.wide { gap: 8px; }
.signature {
  position: absolute;
  right: 12px;
  top: -6px;
  display: flex;
  gap: 4px;
  align-items: center;
  height: 18px;
  color: #fff;
  font-size: 17px;
  line-height: 18px;
  font-family: "Liberation Sans", "Noto Sans CJK SC", sans-serif;
  text-shadow: 1px 1px 1px #222, 0 0 2px #333;
  pointer-events: none;
}
.signature b { font-size: 16px; font-weight: 900; font-style: italic; }
</style>
